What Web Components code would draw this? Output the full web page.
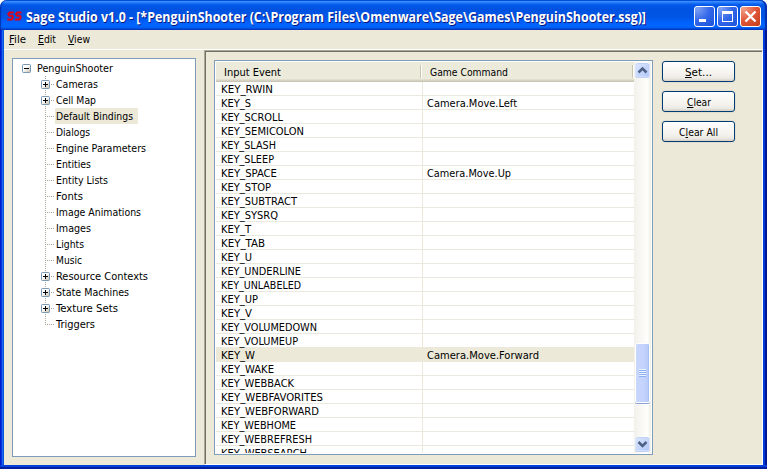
<!DOCTYPE html>
<html lang="en"><head><meta charset="utf-8"><title>Sage Studio</title>
<style>html,body{margin:0;height:100%;overflow:hidden;background:#fff}body{font:11px/14px "DejaVu Sans Condensed","DejaVu Sans","Noto Sans",sans-serif;color:#000}</style></head>
<body><sage-window></sage-window>
<script>
// Text scaled horizontally so that it fills the width given in its "w" attribute.
class FitText extends HTMLElement{
  constructor(){super();this.attachShadow({mode:'open'}).innerHTML='<style>:host{display:inline-block;white-space:pre;flex:none}span{display:inline-block;transform-origin:0 50%}::slotted(u){text-underline-offset:1px;text-decoration-thickness:1px;text-decoration-skip-ink:none}</style><span><slot></slot></span>';}
  connectedCallback(){
    const s=this.shadowRoot.querySelector('span'),w=+this.getAttribute('w');
    if(!w)return;
    const n=s.getBoundingClientRect().width;
    if(n){s.style.transform=`translateY(1px) scaleX(${w/n})`;this.style.width=w+'px';}
  }
}

class TitleButton extends HTMLElement{
  constructor(){super();const k=this.getAttribute('kind');
    const g={min:'<path d="M5 14.5h7" stroke-width="3"/>',max:'<path d="M5.500 6v10M15.500 6v10M5 15.500h11" stroke-width="1"/><path d="M5 6.500h11" stroke-width="3"/>',close:'<path d="M5.5 5.5l10 10M15.5 5.5l-10 10" stroke-width="2.4"/>'}[k];
    const c=k==='close'?['#f0a08a','#e2583a','#c23c18']:['#7ea2f4','#3468ea','#1c50d8'];
    this.attachShadow({mode:'open'}).innerHTML=`<style>:host{display:block;width:21px;height:21px}svg{display:block}</style>
<svg width="21" height="21" viewBox="0 0 21 21"><defs><radialGradient id="g" cx=".15" cy=".1" r="1.2"><stop offset="0" stop-color="${c[0]}"/><stop offset=".5" stop-color="${c[1]}"/><stop offset="1" stop-color="${c[2]}"/></radialGradient></defs>
<rect x=".5" y=".5" width="20" height="20" rx="2.5" fill="url(#g)" stroke="#fff"/><g fill="none" stroke="#fff">${g}</g></svg>`;}
}

class TitleBar extends HTMLElement{
  constructor(){super();this.attachShadow({mode:'open'}).innerHTML=`<style>
:host{display:flex;box-sizing:border-box;height:30px;padding:6px 6px 0 7px;align-items:flex-start;border-radius:7px 7px 0 0;
box-shadow:inset -2px 0 1px #0030b0,inset 1px 0 1px #0030b0;
background:linear-gradient(#0058e6 0,#0058e6 1px,#3a8cff 1px,#3a8cff 2px,#1973f8 3px,#0458e8 5px,#0053e1 9px,#0055e5 17px,#0060fa 22px,#0066ff 26px,#005bee 28px,#003fc8 29px,#003bc0 30px)}
svg{margin:5px 4px 0 0;width:15px;height:10px;flex:none}
.t{flex:1;font:bold 14px/20px "Open Sans","Noto Sans",sans-serif;color:#fff;text-shadow:1px 1px #0a1883}
.b{display:flex;gap:2px}</style>
<svg viewBox="0 0 15 10"><path d="M6.800 1.500H2.500L1.300 3 2.300 4.700h3L6 6.300 4.800 8.500H.3M14.500 1.500h-4.300L9 3l1 1.700h3l.700 1.600-1.200 2.200H7.800" fill="none" stroke="#e60014" stroke-width="1.900"/></svg>
<div class="t"><fit-text w="620">Sage Studio v1.0 - [*PenguinShooter (C:\\Program Files\\Omenware\\Sage\\Games\\PenguinShooter.ssg)]</fit-text></div>
<div class="b"><title-button kind="min"></title-button><title-button kind="max"></title-button><title-button kind="close"></title-button></div>`;}
}

class MenuBar extends HTMLElement{
  constructor(){super();this.attachShadow({mode:'open'}).innerHTML=`<style>:host{display:flex;height:20px;box-sizing:border-box;padding:2px 0 0 5px;gap:12px;border-bottom:1px solid #fff}u{text-underline-offset:1px;text-decoration-skip-ink:none}</style>
<fit-text w="17"><u>F</u>ile</fit-text><fit-text w="18"><u>E</u>dit</fit-text><fit-text w="22"><u>V</u>iew</fit-text>`;}
}

class TreeItem extends HTMLElement{
  constructor(){super();const a=n=>this.hasAttribute(n),box=a('plus')||a('minus');
    const root=a('minus'),last=a('last');
    this.attachShadow({mode:'open'}).innerHTML=`<style>
:host{display:flex;height:16px;padding-left:${root?9:28}px}
svg{flex:none;display:block;margin-right:${root?4:1}px}
.l{padding:0 ${a('selected')?5:1}px 0 1px;height:16px;line-height:16px;${a('selected')?'background:#ece9d8':''}}</style>
<svg width="${root?10:13}" height="16"><defs><linearGradient id="b" x2="1" y2="1"><stop stop-color="#fff"/><stop offset=".4" stop-color="#fff"/><stop offset="1" stop-color="#c3baaa"/></linearGradient></defs>
${root?'':`<path d="M4.5 ${last?'0v9':'0v16'}" stroke="#aca899" stroke-dasharray="1 1"/><path d="M6 8.5h7" stroke="#aca899" stroke-dasharray="1 1"/>`}
${box?`<rect x=".5" y="4.5" width="8" height="8" rx=".8" fill="url(#b)" stroke="#7898b5"/><path d="M2 8.5h5${a('plus')?'M4.5 6v5':''}" stroke="#000" fill="none"/>`:''}</svg>
<div class="l"><fit-text w="${this.getAttribute('w')}">${this.textContent}</fit-text></div>`;}
}

class TreeView extends HTMLElement{
  constructor(){super();
    const d=[['PenguinShooter',76,'minus'],['Cameras',42,'plus'],['Cell Map',40,'plus'],['Default Bindings',77,'selected'],['Dialogs',34],['Engine Parameters',90],['Entities',35],['Entity Lists',52],['Fonts',27],['Image Animations',85],['Images',35],['Lights',28],['Music',26],['Resource Contexts',92,'plus'],['State Machines',73,'plus'],['Texture Sets',62,'plus'],['Triggers',39,'last']];
    this.attachShadow({mode:'open'}).innerHTML=`<style>:host{display:block;box-sizing:border-box;width:184px;height:399px;background:#fff;border:1px solid #7f9db9;padding-top:1px;overflow:hidden}</style>`+d.map(([t,w,k=''])=>`<tree-item w="${w}" ${k}>${t}</tree-item>`).join('');}
}

class ScrollBar extends HTMLElement{
  constructor(){super();
    const b=f=>`<svg width="17" height="17"><defs><linearGradient id="s" x2="1" y2="1"><stop stop-color="#dce6fe"/><stop offset="1" stop-color="#b0c6fa"/></linearGradient></defs><rect x="1.5" y="1.5" width="14" height="14" rx="2" fill="url(#s)" stroke="#a5bdef"/><rect x="1.5" y="1" width="14" height="14" rx="2" fill="none" stroke="#fff" opacity=".6"/><path d="${f?'M4.5 6l4 4 4-4':'M4.5 10.500l4-4 4 4'}" fill="none" stroke="#4d6185" stroke-width="2.5"/></svg>`;
    this.attachShadow({mode:'open'}).innerHTML=`<style>
:host{display:flex;flex-direction:column;width:17px;background:linear-gradient(90deg,#f3f1ec,#fefefb 80%,#eeede5)}svg{display:block;flex:none}
.sp{height:264px}.th{box-sizing:border-box;height:60px;margin:0 1px;border:1px solid #fff;border-radius:2px;box-shadow:0 1px #8aa4d8,inset -1px 0 #a8bff0;background:linear-gradient(90deg,#c9d7fc,#c4d3fd 60%,#b5c9f8);display:flex;align-items:center;justify-content:center}
.gr{width:7px;height:8px;background:repeating-linear-gradient(#eef4fe 0 1px,#8cb0f8 1px 2px)}.r{flex:1}</style>${b(0)}<div class="sp"></div><div class="th"><div class="gr"></div></div><div class="r"></div>${b(1)}`;}
}

class BindingRow extends HTMLElement{
  constructor(){super();const w=this.getAttribute('w'),c=this.getAttribute('command'),cw=this.getAttribute('cw');
    this.attachShadow({mode:'open'}).innerHTML=`<style>:host{display:grid;grid-template-columns:206px 212px;height:14px;background:${this.hasAttribute('selected')?'#ece9d8':'#fff'}}
div{box-sizing:border-box;height:14px;border-bottom:1px solid #ebe9dd;line-height:14px;padding-left:5px;white-space:nowrap}div+div{border-left:1px solid #ece9d8;padding-left:4px}</style>
<div><fit-text w="${w}">${this.textContent}</fit-text></div><div>${c?`<fit-text w="${cw}">${c}</fit-text>`:''}</div>`;}
}

class BindingList extends HTMLElement{
  constructor(){super();
    const d=[['RWIN',52],['S',30,'Left',90],['SCROLL',62],['SEMICOLON',83],['SLASH',55],['SLEEP',53],['SPACE',56,'Up',84],['STOP',50],['SUBTRACT',76],['SYSRQ',57],['T',30],['TAB',44],['U',31],['UNDERLINE',80],['UNLABELED',80],['UP',37],['V',31],['VOLUMEDOWN',96],['VOLUMEUP',77],['W',34,'Forward',112],['WAKE',53],['WEBBACK',73],['WEBFAVORITES',102],['WEBFORWARD',98],['WEBHOME',75],['WEBREFRESH',91],['WEBSEARCH',86]];
    this.attachShadow({mode:'open'}).innerHTML=`<style>:host{display:flex;box-sizing:border-box;width:439px;height:395px;border:1px solid #7f9db9;padding:1px;background:#fff}
.c{width:418px;overflow:hidden}
.h{display:grid;grid-template-columns:206px 212px;height:20px;box-sizing:border-box;background:linear-gradient(#ebeadb 17px,#e2decd 17px 18px,#d6d2c2 18px 19px,#cbc7b8 19px)}
.h div{display:flex;box-sizing:border-box;justify-content:space-between;padding:3px 0 0 8px;height:20px}.h div::after{content:"";width:1px;height:13px;background:#c7c5b2;box-shadow:1px 0 #fff;margin-right:1px}</style>
<div class="c"><div class="h"><div><fit-text w="57">Input Event</fit-text></div><div><fit-text w="78">Game Command</fit-text></div></div>
${d.map(([k,w,c,cw])=>`<binding-row w="${w}" ${c?`command="Camera.Move.${c}" cw="${cw}"`:''} ${k==='W'?'selected':''}>KEY_${k}</binding-row>`).join('')}</div><scroll-bar></scroll-bar>`;}
}

class PushButton extends HTMLElement{
  constructor(){super();this.attachShadow({mode:'open'}).innerHTML=`<style>:host{display:flex;box-sizing:border-box;width:73px;height:21px;border:1px solid #003c74;border-radius:3px;background:linear-gradient(#fff,#f4f3ee 60%,#ecebe5 85%,#d6d0c5);align-items:center;justify-content:center;box-shadow:0 0 0 1px #e3dfd0}</style><slot></slot>`;}
}

class SageWindow extends HTMLElement{
  constructor(){super();this.attachShadow({mode:'open'}).innerHTML=`<style>
:host{display:block;width:767px;height:469px}
.frame{height:439px;box-sizing:border-box;padding:0 4px 4px;
background:linear-gradient(#ece9d8,#ece9d8) 4px 0/759px 435px no-repeat,
linear-gradient(#0441d8 2px,#001ea0 2px) 0 100%/100% 4px no-repeat,
linear-gradient(90deg,#0019cf 1px,#0831d9 1px 2px,#166aee 2px 3px,#0855dd 3px) 0 0/4px 100% no-repeat,
linear-gradient(90deg,#003bda 2px,#001590 2px) 100% 0/4px 100% no-repeat}
.body{display:grid;grid-template-columns:200px 559px;height:415px}
.left{padding:8px 0 0 8px}
.right{box-sizing:border-box;display:flex;gap:9px;align-items:flex-start;padding:9px 0 0 9px;border:solid #fff;border-width:1px;border-top-color:#aca899;border-left-color:#aca899;box-shadow:inset 1px 1px #716f64}
.btns{display:flex;flex-direction:column;gap:9px;padding-top:1px}u{text-underline-offset:1px;text-decoration-skip-ink:none}</style>
<title-bar></title-bar><div class="frame"><menu-bar></menu-bar><div class="body"><div class="left"><tree-view></tree-view></div>
<div class="right"><binding-list></binding-list><div class="btns"><push-button><fit-text w="27"><u>S</u>et...</fit-text></push-button><push-button><fit-text w="24"><u>C</u>lear</fit-text></push-button><push-button><fit-text w="39">C<u>l</u>ear All</fit-text></push-button></div></div></div></div>`;}
}
for(const [n,c] of Object.entries({'fit-text':FitText,'title-button':TitleButton,'title-bar':TitleBar,'menu-bar':MenuBar,'tree-item':TreeItem,'tree-view':TreeView,'scroll-bar':ScrollBar,'binding-row':BindingRow,'binding-list':BindingList,'push-button':PushButton,'sage-window':SageWindow}))customElements.define(n,c);
</script></body></html>
